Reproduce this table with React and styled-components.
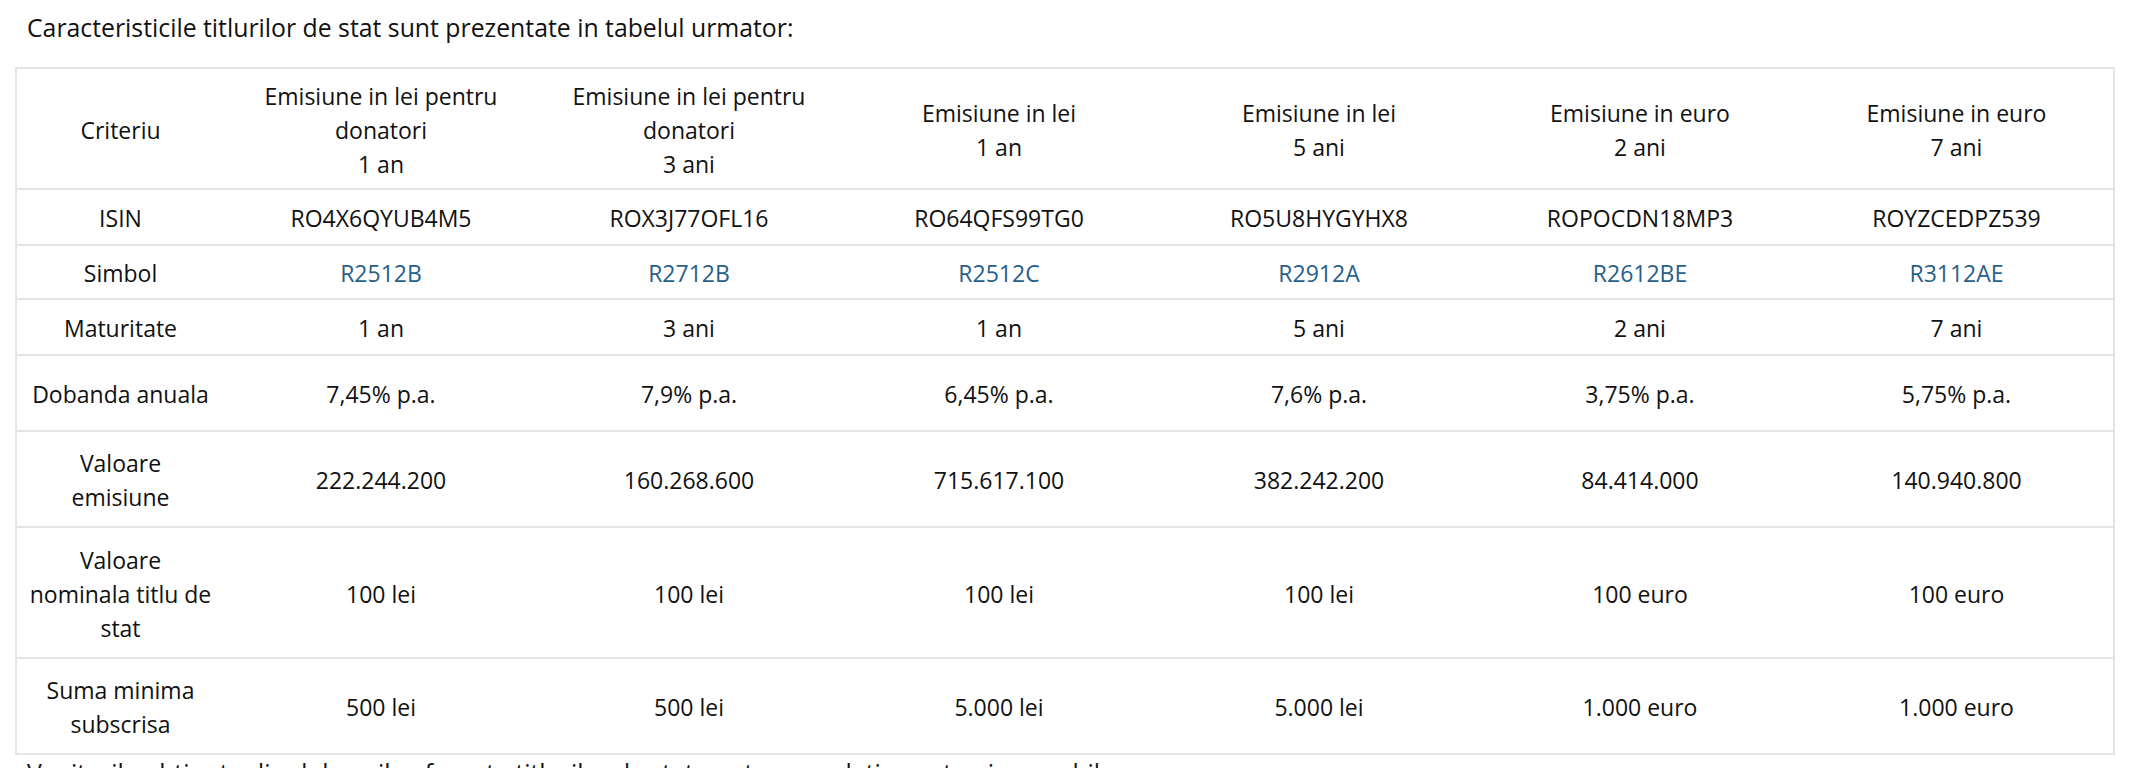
import React from 'react'
import styled, { createGlobalStyle } from 'styled-components'

const GlobalStyle = createGlobalStyle`
  body {
    margin: 0;
    background: #fff;
    font-family: "Open Sans", "Noto Sans", sans-serif;
    color: #111;
  }
`

const Page = styled.div`
  padding: 10px 0 0 15px;
  width: 2098px;
`

const Intro = styled.p`
  margin: 0 0 23px 12px;
  font-size: 24.8px;
  line-height: 34px;
`

const Table = styled.table`
  width: 2098px;
  border-collapse: collapse;
  border: 2px solid #e4e4e4;
  table-layout: fixed;
  font-size: 23px;
  line-height: 34px;
`

const Row = styled.tr`
  height: ${(p) => p.$h}px;
  border-bottom: 2px solid #e4e4e4;
`

const Cell = styled.td`
  padding: ${(p) => (p.$head ? '3px 10px 0' : '2px 10px 0')};
  text-align: center;
  vertical-align: middle;
  white-space: nowrap;
  font-weight: 400;
`

const Symbol = styled.a`
  color: #28608a;
  text-decoration: none;
`

const Outro = styled.p`
  margin: 0 0 0 12px;
  font-size: 24.8px;
  line-height: 34px;
`

const widths = [208, 314, 302, 318, 322, 320, 314]

const header = [
  ['Criteriu'],
  ['Emisiune in lei pentru', 'donatori', '1 an'],
  ['Emisiune in lei pentru', 'donatori', '3 ani'],
  ['Emisiune in lei', '1 an'],
  ['Emisiune in lei', '5 ani'],
  ['Emisiune in euro', '2 ani'],
  ['Emisiune in euro', '7 ani'],
]

const rows = [
  { label: ['ISIN'], h: 56, values: ['RO4X6QYUB4M5', 'ROX3J77OFL16', 'RO64QFS99TG0', 'RO5U8HYGYHX8', 'ROPOCDN18MP3', 'ROYZCEDPZ539'] },
  { label: ['Simbol'], h: 54, link: true, values: ['R2512B', 'R2712B', 'R2512C', 'R2912A', 'R2612BE', 'R3112AE'] },
  { label: ['Maturitate'], h: 56, values: ['1 an', '3 ani', '1 an', '5 ani', '2 ani', '7 ani'] },
  { label: ['Dobanda anuala'], h: 76, values: ['7,45% p.a.', '7,9% p.a.', '6,45% p.a.', '7,6% p.a.', '3,75% p.a.', '5,75% p.a.'] },
  { label: ['Valoare', 'emisiune'], h: 96, values: ['222.244.200', '160.268.600', '715.617.100', '382.242.200', '84.414.000', '140.940.800'] },
  { label: ['Valoare', 'nominala titlu de', 'stat'], h: 131, values: ['100 lei', '100 lei', '100 lei', '100 lei', '100 euro', '100 euro'] },
  { label: ['Suma minima', 'subscrisa'], h: 96, values: ['500 lei', '500 lei', '5.000 lei', '5.000 lei', '1.000 euro', '1.000 euro'] },
]

const Lines = ({ lines }) =>
  lines.map((l, i) => (
    <React.Fragment key={i}>
      {i > 0 && <br />}
      {l}
    </React.Fragment>
  ))

export default function App () {
  return (
    <Page>
      <GlobalStyle />
      <Intro>Caracteristicile titlurilor de stat sunt prezentate in tabelul urmator:</Intro>
      <Table>
        <colgroup>
          {widths.map((w, i) => <col key={i} style={{ width: w }} />)}
        </colgroup>
        <tbody>
          <Row $h={121}>
            {header.map((h, i) => (
              <Cell key={i} $head><Lines lines={h} /></Cell>
            ))}
          </Row>
          {rows.map((r) => (
            <Row key={r.label.join(' ')} $h={r.h}>
              <Cell><Lines lines={r.label} /></Cell>
              {r.values.map((v, i) => (
                <Cell key={i}>
                  {r.link ? <Symbol href='#'>{v}</Symbol> : v}
                </Cell>
              ))}
            </Row>
          ))}
        </tbody>
      </Table>
      <Outro>Veniturile obtinute din dobanzile aferente titlurilor de stat pentru populatie sunt neimpozabile.</Outro>
    </Page>
  )
}
